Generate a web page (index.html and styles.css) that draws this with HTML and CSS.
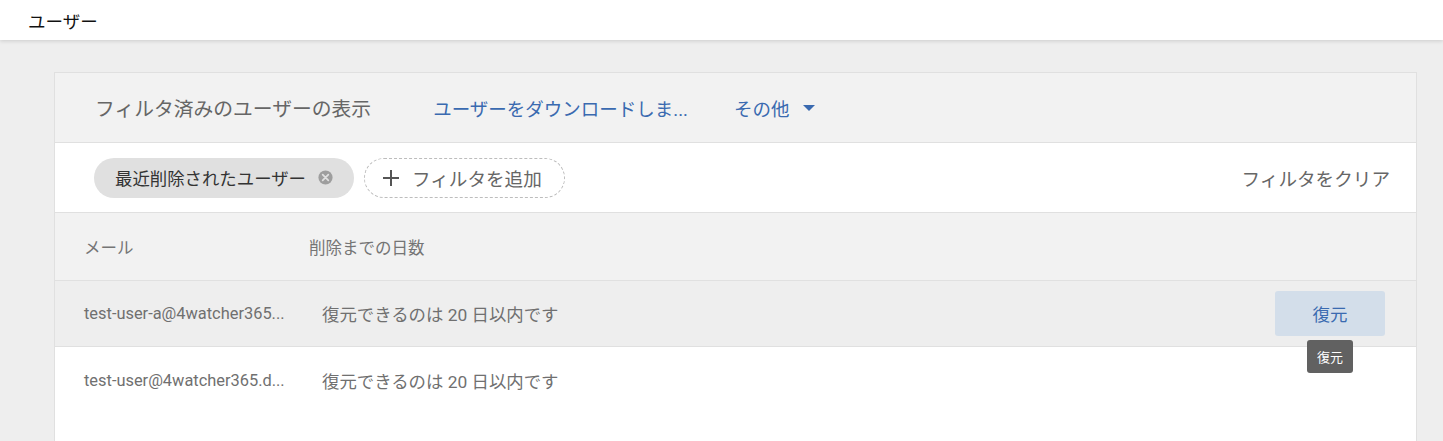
FILE: index.html
```html
<!DOCTYPE html>
<html lang="ja">
<head>
  <meta charset="UTF-8" />
  <title>ユーザー</title>
  <link rel="stylesheet" href="styles.css">
</head>
<body>
  <header class="top-bar">ユーザー</header>

  <main class="page">
    <section class="card">
      <div class="card-head">
        <span class="head-title">フィルタ済みのユーザーの表示</span>
        <a class="head-link download">ユーザーをダウンロードしま...</a>
        <a class="head-link more">その他 <span class="caret"></span></a>
      </div>

      <div class="filter-row">
        <span class="chip">
          最近削除されたユーザー
          <svg class="chip-x" width="17" height="17" viewBox="0 0 24 24">
            <circle cx="12" cy="12" r="10" fill="#9e9e9e"/>
            <path d="M8 8l8 8M16 8l-8 8" stroke="#e0e0e0" stroke-width="2.4" stroke-linecap="round"/>
          </svg>
        </span>
        <span class="add-filter">
          <svg width="18" height="18" viewBox="0 0 18 18">
            <path d="M9 1v16M1 9h16" stroke="#555" stroke-width="2"/>
          </svg>
          フィルタを追加
        </span>
        <span class="clear">フィルタをクリア</span>
      </div>

      <div class="table-head">
        <span class="col-mail">メール</span>
        <span class="col-days">削除までの日数</span>
      </div>

      <div class="row hover">
        <span class="cell-mail" title="test-user-a@4watcher365.dev">test-user-a@4watcher365...</span>
        <span class="cell-days">復元できるのは 20 日以内です</span>
        <div class="restore-wrap">
          <button class="restore">復元</button>
          <span class="tooltip">復元</span>
        </div>
      </div>

      <div class="row last">
        <span class="cell-mail" title="test-user@4watcher365.dev">test-user@4watcher365.d...</span>
        <span class="cell-days">復元できるのは 20 日以内です</span>
      </div>
    </section>
  </main>
</body>
</html>
```

FILE: styles.css
```css
* {
  box-sizing: border-box;
}

body {
  margin: 0;
  background: #eeeeee;
  font-family: Roboto, "Noto Sans CJK JP", sans-serif;
  color: #666;
  height: 441px;
  overflow: hidden;
}

.top-bar {
  height: 40px;
  background: #fff;
  padding-left: 28px;
  display: flex;
  align-items: center;
  font-size: 17.5px;
  color: #111;
  box-shadow: 0 1px 4px rgba(0, 0, 0, 0.15);
  position: relative;
}

.page {
  padding: 32px 26px 0 54px;
}

.card {
  background: #fff;
  border: 1px solid #e0e0e0;
  border-bottom: none;
  height: 369px;
}

.card-head {
  height: 70px;
  background: #f2f2f2;
  display: flex;
  align-items: center;
  padding-left: 40px;
  border-bottom: 1px solid #e0e0e0;
}

.head-title {
  font-size: 19.8px;
  color: #666;
}

.head-link {
  font-size: 18.5px;
  color: #3a6ab0;
  cursor: pointer;
}

.download {
  margin-left: 62px;
}

.more {
  margin-left: 46px;
  display: flex;
  align-items: center;
}

.caret {
  margin-left: 14px;
  width: 0;
  height: 0;
  border-left: 6px solid transparent;
  border-right: 6px solid transparent;
  border-top: 6px solid #3a6ab0;
}

.filter-row {
  height: 70px;
  display: flex;
  align-items: center;
  padding: 0 26px 0 39px;
  border-bottom: 1px solid #e0e0e0;
}

.chip {
  height: 40px;
  width: 260px;
  border-radius: 20px;
  background: #e0e0e0;
  display: flex;
  align-items: center;
  padding-left: 21px;
  font-size: 17.4px;
  color: #333;
}

.chip-x {
  margin-left: 11px;
}

.add-filter {
  margin-left: 10px;
  height: 40px;
  width: 201px;
  border: 1px dashed #bdbdbd;
  border-radius: 20px;
  display: flex;
  align-items: center;
  padding-left: 17px;
  gap: 12px;
  font-size: 18.6px;
  color: #666;
}

.clear {
  margin-left: auto;
  font-size: 18.6px;
  color: #666;
}

.table-head {
  height: 68px;
  background: #f2f2f2;
  display: flex;
  align-items: center;
  padding-left: 29px;
  border-bottom: 1px solid #e0e0e0;
  font-size: 16.5px;
  color: #757575;
}

.col-mail {
  width: 225px;
}

.row {
  height: 66px;
  display: flex;
  align-items: center;
  padding-left: 29px;
  border-bottom: 1px solid #e0e0e0;
  font-size: 16.4px;
  color: #707070;
}

.row.hover {
  background: #eeeeee;
}

.row.last {
  border-bottom: none;
}

.cell-mail {
  width: 238px;
  white-space: nowrap;
}

.cell-days {
  font-size: 17.4px;
}

.restore-wrap {
  margin-left: auto;
  margin-right: 31px;
  position: relative;
}

.restore {
  width: 110px;
  height: 45px;
  border: none;
  border-radius: 3px;
  background: #d3deea;
  color: #3a6ab0;
  font-family: "Noto Sans CJK JP", sans-serif;
  font-size: 17.5px;
  cursor: pointer;
}

.tooltip {
  position: absolute;
  top: 49px;
  left: 32px;
  width: 46px;
  height: 33px;
  background: #616161;
  color: #fff;
  font-size: 13px;
  border-radius: 3px;
  display: flex;
  align-items: center;
  justify-content: center;
}
```
